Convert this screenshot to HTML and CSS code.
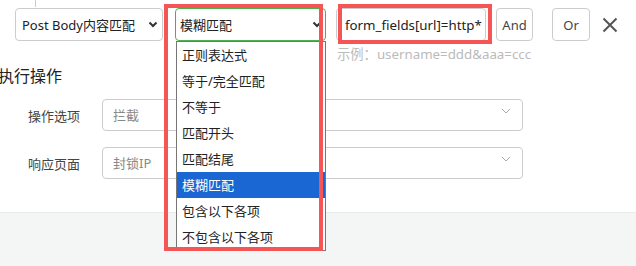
FILE: index.html
```html
<!DOCTYPE html>
<html lang="zh">
<head>
<meta charset="utf-8">
<link rel="stylesheet" href="styles.css">
</head>
<body>
<div class="page">
  <div class="tree-line"></div>
  <div class="cond-row">
    <div class="sel sel-field">
      <span>Post Body内容匹配</span>
      <svg class="chev" width="10" height="7" viewBox="0 0 10 7"><polyline points="1.5,1.5 5,5 8.5,1.5" fill="none" stroke="#333" stroke-width="2"/></svg>
    </div>
    <div class="sel-wrap">
      <div class="sel sel-op">
        <span>模糊匹配</span>
        <svg class="chev" width="10" height="7" viewBox="0 0 10 7"><polyline points="1.5,1.5 5,5 8.5,1.5" fill="none" stroke="#333" stroke-width="2"/></svg>
      </div>
      <ul class="dropdown">
        <li>正则表达式</li>
        <li>等于/完全匹配</li>
        <li>不等于</li>
        <li>匹配开头</li>
        <li>匹配结尾</li>
        <li class="active">模糊匹配</li>
        <li>包含以下各项</li>
        <li>不包含以下各项</li>
      </ul>
      <div class="mark mark-op"></div>
    </div>
    <div class="val-wrap">
      <div class="val-input">form_fields[url]=http*</div>
      <div class="hint">示例：username=ddd&amp;aaa=ccc</div>
      <div class="mark mark-val"></div>
    </div>
    <button class="btn btn-and">And</button>
    <button class="btn btn-or">Or</button>
    <svg class="close" width="16" height="16" viewBox="0 0 16 16"><path d="M1.5 1.5 L14.5 14.5 M14.5 1.5 L1.5 14.5" stroke="#555" stroke-width="2" fill="none"/></svg>
  </div>

  <section class="action">
    <h3 class="action-title">执行操作</h3>
    <div class="field">
      <label class="field-label">操作选项</label>
      <div class="box"><span>拦截</span><svg class="box-chev" width="10" height="6" viewBox="0 0 10 6"><polyline points="1,1 5,5 9,1" fill="none" stroke="#aaa" stroke-width="1"/></svg></div>
    </div>
    <div class="field">
      <label class="field-label">响应页面</label>
      <div class="box"><span>封锁IP</span><svg class="box-chev" width="10" height="6" viewBox="0 0 10 6"><polyline points="1,1 5,5 9,1" fill="none" stroke="#aaa" stroke-width="1"/></svg></div>
    </div>
  </section>

  <footer class="footer"></footer>
</div>
</body>
</html>
```

FILE: styles.css
```css
* { box-sizing: border-box; }
html, body {
  margin: 0;
  padding: 0;
  background: #fff;
}
body {
  font-family: "Noto Sans", "Noto Sans CJK SC", sans-serif;
  color: #333;
  width: 636px;
  height: 266px;
  overflow: hidden;
}
.page {
  position: relative;
  height: 266px;
  display: flex;
  flex-direction: column;
}
.tree-line {
  margin-left: 35px;
  width: 1px;
  height: 7px;
  background: #ccc;
}
.cond-row {
  display: flex;
  align-items: center;
  margin-top: 1px;
  padding-left: 15px;
  height: 33px;
}
.sel {
  height: 33px;
  border: 1px solid #ccc;
  border-radius: 4px;
  display: flex;
  align-items: center;
  justify-content: space-between;
  padding: 0 4px 0 6px;
  font-size: 13px;
  color: #222;
  background: #fff;
}
.sel-field {
  width: 148px;
}
.sel-wrap {
  position: relative;
  margin-left: 12px;
}
.sel-op {
  width: 151px;
  border-color: #4cb050;
  padding-left: 4px;
  padding-right: 3px;
}
.chev { display: block; }
.dropdown {
  position: absolute;
  left: 1px;
  top: 33px;
  width: 150px;
  margin: 0;
  padding: 0;
  list-style: none;
  border: 1px solid #767676;
  background: #fff;
  z-index: 5;
}
.dropdown li {
  height: 26px;
  line-height: 26px;
  padding-left: 5px;
  font-size: 13px;
  color: #222;
}
.dropdown li.active {
  background: #1a66d2;
  color: #fff;
}
.mark {
  position: absolute;
  border: 4px solid #f55555;
  z-index: 10;
  pointer-events: none;
}
.mark-op {
  left: -11px;
  top: -4px;
  width: 159px;
  height: 247px;
}
.val-wrap {
  position: relative;
  margin-left: 10px;
}
.val-input {
  width: 150px;
  height: 33px;
  border: 1px solid #ccc;
  border-radius: 4px;
  padding-left: 8px;
  display: flex;
  align-items: center;
  font-size: 13.3px;
  color: #222;
  white-space: nowrap;
  overflow: hidden;
}
.hint {
  position: absolute;
  left: 1px;
  top: 38px;
  font-size: 13.3px;
  line-height: 16px;
  color: #bbb;
  white-space: nowrap;
}
.mark-val {
  left: 2px;
  top: -4px;
  width: 154px;
  height: 40px;
}
.btn {
  height: 33px;
  border: 1px solid #ccc;
  border-radius: 4px;
  background: #fff;
  font-family: inherit;
  font-size: 13px;
  color: #444;
  padding: 0;
}
.btn-and {
  width: 37px;
  margin-left: 10px;
}
.btn-or {
  width: 38px;
  margin-left: 19px;
}
.close {
  margin-left: 12px;
  display: block;
}
.action {
  display: flex;
  flex-direction: column;
}
.action-title {
  margin: 24px 0 0 -2px;
  font-size: 16px;
  line-height: 22px;
  font-weight: normal;
  color: #222;
}
.field {
  display: flex;
  align-items: center;
  margin-top: 16px;
}
.action-title + .field {
  margin-top: 12px;
}
.field-label {
  width: 80px;
  text-align: right;
  font-size: 13px;
  color: #444;
}
.box {
  margin-left: 22px;
  width: 421px;
  height: 32px;
  border: 1px solid #ccc;
  border-radius: 4px;
  display: flex;
  justify-content: space-between;
  align-items: flex-start;
  padding: 0 11px 0 10px;
  font-size: 13px;
  color: #888;
}
.box span {
  line-height: 30px;
}
.box-chev {
  margin-top: 8px;
  display: block;
}
.footer {
  margin-top: 33px;
  flex: 1;
  background: #f4f6f6;
  border-top: 1px solid #e9ebeb;
}
```
